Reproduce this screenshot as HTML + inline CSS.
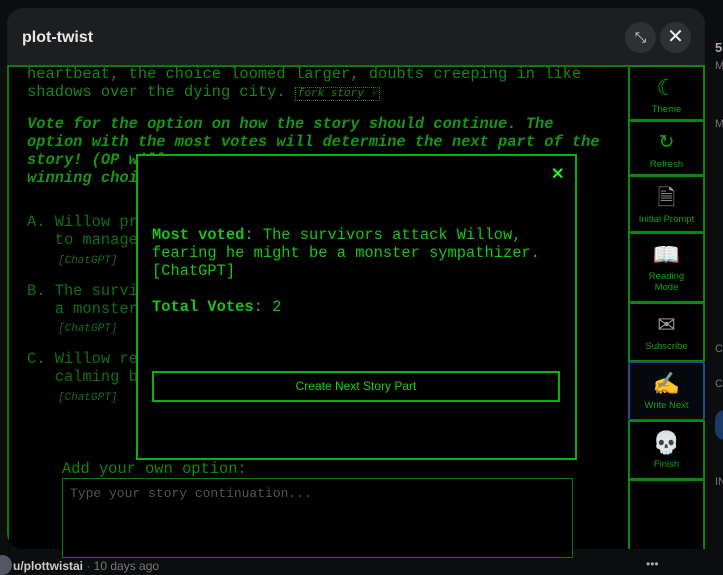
<!DOCTYPE html>
<html><head><meta charset="utf-8"><style>
*{margin:0;padding:0;box-sizing:border-box}
body{width:723px;height:573px;overflow:hidden;background:#0b0d0f;position:relative;font-family:"Liberation Sans",sans-serif}
.a{position:absolute}
.mono{font-family:"Liberation Mono",monospace;font-size:15.4px;line-height:18px;white-space:pre}
.side{position:absolute;left:628px;width:77px;border:2px solid #0a8a0a;color:#16a016;font-size:9.5px;line-height:11px;text-align:center;background:#000}
.side .i{font-size:22px;line-height:26px;margin-top:8px;margin-bottom:3px;color:#999}
</style></head><body>
<div class="a" style="left:715px;top:40px;color:#aaa;font-size:13px;font-weight:bold">5</div>
<div class="a" style="left:715px;top:60px;color:#777;font-size:11px">M</div>
<div class="a" style="left:715px;top:118px;color:#777;font-size:11px">M</div>
<div class="a" style="left:715px;top:343px;color:#777;font-size:11px">C</div>
<div class="a" style="left:715px;top:378px;color:#777;font-size:11px">C</div>
<div class="a" style="left:715px;top:410px;width:20px;height:30px;border-radius:10px;background:#1b3a6a"></div>
<div class="a" style="left:715px;top:476px;color:#777;font-size:11px">IN</div>
<div class="a" style="left:7px;top:8px;width:698px;height:541px;border-radius:16px;background:#1c1e20;overflow:hidden">
 <div class="a" style="left:15px;top:21px;color:#e6e6e6;font-size:16px;font-weight:bold">plot-twist</div>
 <div class="a" style="left:618px;top:14px;width:31px;height:31px;border-radius:16px;background:#2e3133;color:#ddd;font-size:14px;text-align:center;line-height:31px">⤡</div>
 <div class="a" style="left:653px;top:14px;width:31px;height:31px;border-radius:16px;background:#2e3133;color:#eee;font-size:20px;text-align:center;line-height:31px">✕</div>
 <div class="a" style="left:0;top:57px;width:698px;height:484px;background:#000;border-top:2px solid #0a7a0a;border-left:2px solid #0a7a0a"></div>
</div>
<div class="a mono" style="left:27px;top:65px;color:#1a851a">heartbeat, the choice loomed larger, doubts creeping in like
shadows over the dying city. <span style="font-style:italic;font-size:11px;border:1px dotted #1a851a;padding:0 2px">fork story ⑂</span></div>
<div class="a mono" style="left:27px;top:115px;color:#169616;font-weight:bold;font-style:italic">Vote for the option on how the story should continue. The
option with the most votes will determine the next part of the
story! (OP will
winning choi</div>
<div class="a mono" style="left:27px;top:213px;color:#156f15">A. Willow pr
   to manage</div>
<div class="a mono" style="left:58px;top:252px;color:#156f15;font-size:11px;font-style:italic">[ChatGPT]</div>
<div class="a mono" style="left:27px;top:282px;color:#156f15">B. The survi
   a monster</div>
<div class="a mono" style="left:58px;top:320px;color:#156f15;font-size:11px;font-style:italic">[ChatGPT]</div>
<div class="a mono" style="left:27px;top:350px;color:#156f15">C. Willow re
   calming b</div>
<div class="a mono" style="left:58px;top:389px;color:#156f15;font-size:11px;font-style:italic">[ChatGPT]</div>
<div class="a mono" style="left:62px;top:460px;color:#168516">Add your own option:</div>
<div class="a" style="left:62px;top:478px;width:511px;height:80px;border:1px solid #0a7a0a;background:#000"></div>
<div class="a mono" style="left:70px;top:485px;color:#555;font-size:13px">Type your story continuation...</div>
<div class="a" style="left:136px;top:154px;width:441px;height:306px;border:2px solid #0bb00b;background:#000"></div>
<div class="a" style="left:551px;top:164px;color:#22ee22;font-size:16px;font-weight:bold">✕</div>
<div class="a mono" style="left:152px;top:226px;color:#18c418"><b>Most voted</b>: The survivors attack Willow,
fearing he might be a monster sympathizer.
[ChatGPT]

<b>Total Votes</b>: 2</div>
<div class="a" style="left:152px;top:371px;width:408px;height:31px;border:2px solid #0bb00b;color:#1bd01b;font-size:12px;text-align:center;line-height:27px">Create Next Story Part</div>
<div class="side" style="top:65px;height:56px"><div class="i" style="color:#16a016">☾</div>Theme</div>
<div class="side" style="top:120px;height:56px"><div class="i" style="color:#16a016;font-size:19px">↻</div>Refresh</div>
<div class="side" style="top:175px;height:58px"><div class="i">🗎</div>Initial Prompt</div>
<div class="side" style="top:232px;height:71px"><div class="i">📖</div>Reading<br>Mode</div>
<div class="side" style="top:302px;height:60px"><div class="i">✉</div>Subscribe</div>
<div class="side" style="top:361px;height:60px;border:2px solid #2a4a8a;border-radius:3px;background:#05080c"><div class="i" style="color:#c89a40">✍</div>Write Next</div>
<div class="side" style="top:420px;height:60px"><div class="i">💀</div>Finish</div>
<div class="side" style="top:479px;height:70px;border-bottom:none"></div>
<div class="a" style="left:-8px;top:555px;width:20px;height:20px;border-radius:10px;background:#556"></div>
<div class="a" style="left:13px;top:559px;color:#ccc;font-size:12px"><b>u/plottwistai</b> <span style="color:#777">· 10 days ago</span></div>
<div class="a" style="left:646px;top:557px;color:#aaa;font-size:12px">•••</div>
</body></html>
